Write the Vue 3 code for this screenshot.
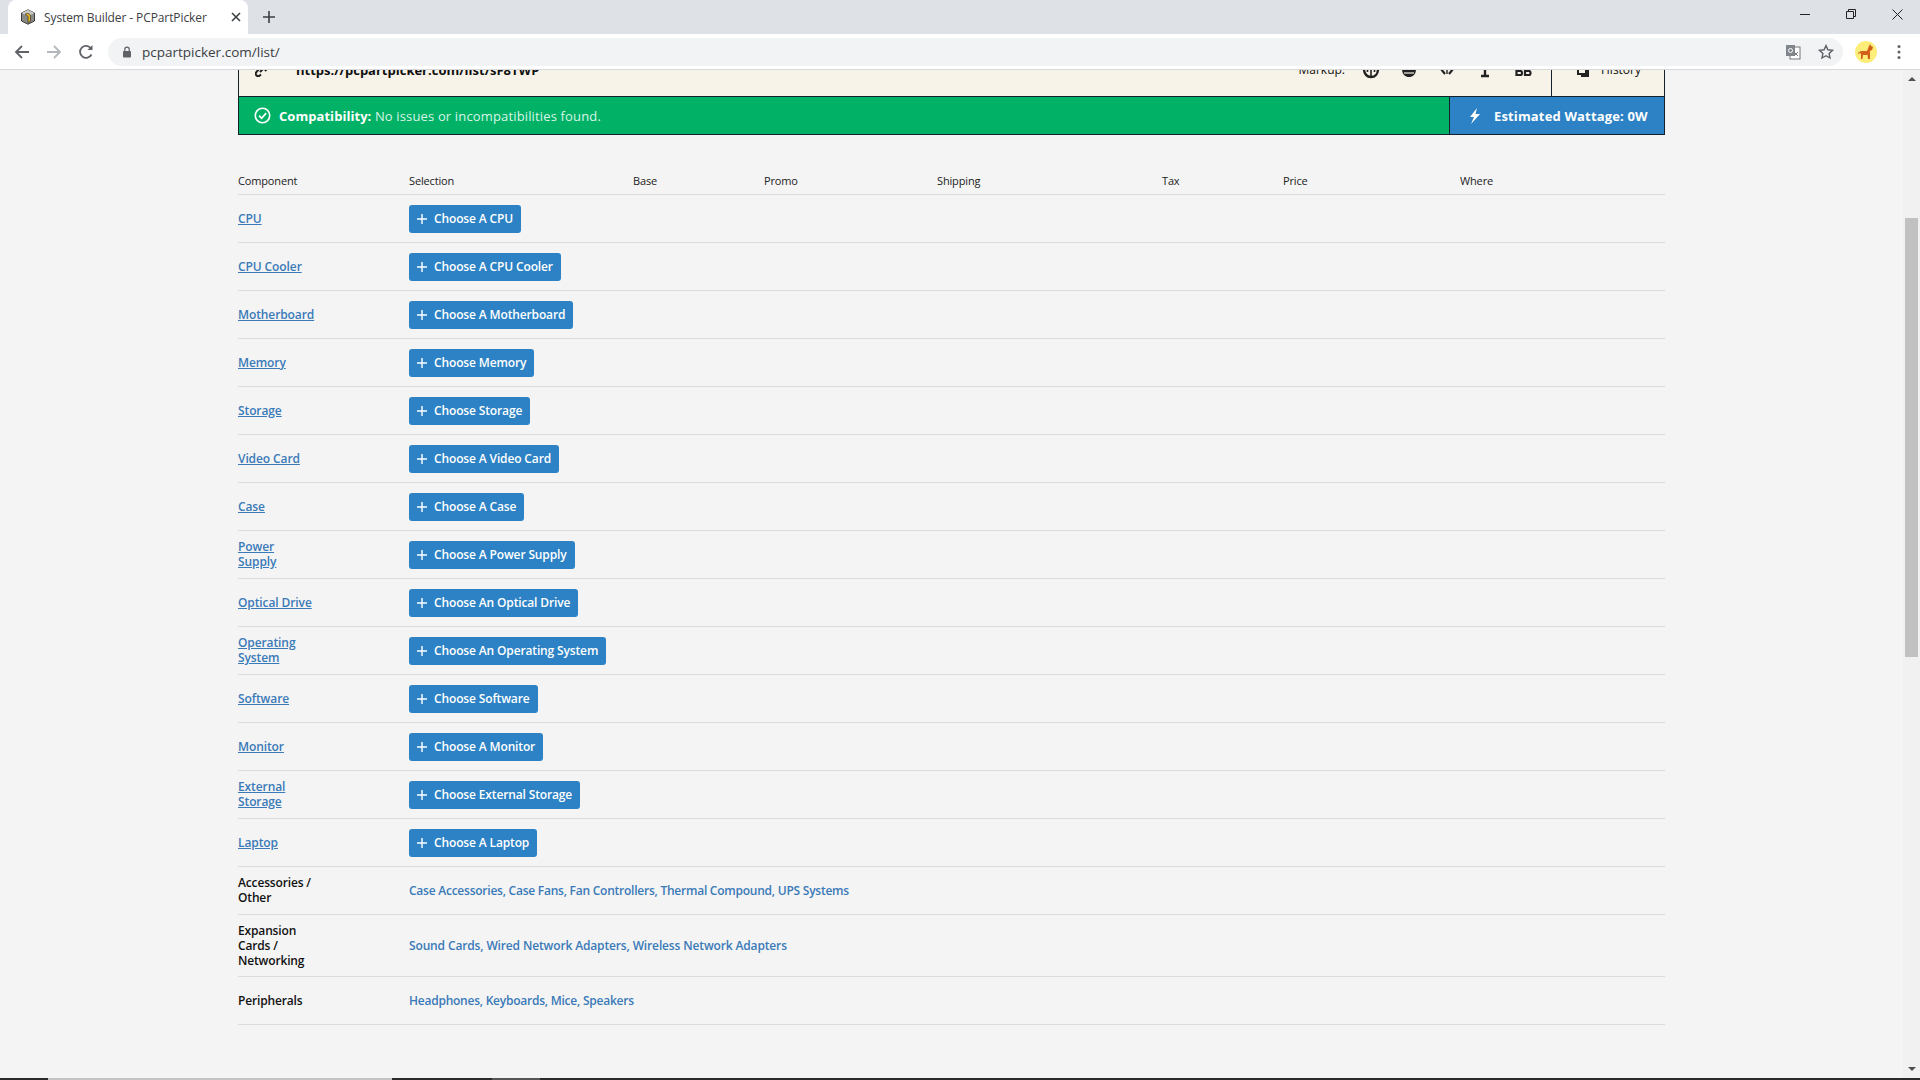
<template>
  <div class="window">
    <div class="tabstrip">
      <div class="tab">
        <svg class="favicon" viewBox="0 0 16 16" width="16" height="16">
          <path d="M8 .8 14.500 4v8L8 15.200 1.500 12V4z" fill="#8b8b86" stroke="#3a3a3a" stroke-width="1" />
          <path d="M8 .8 14.500 4 8 7.200 1.500 4z" fill="#c8c8c2" />
          <path d="M5 5.500C7 3.500 10.500 4.500 10.500 7.500V12L8 13.500V8C8 6.500 6.500 6 5 5.500z" fill="#e8b51e" stroke="#33302a" stroke-width=".7" />
        </svg>
        <span class="tab-title">System Builder - PCPartPicker</span>
        <svg class="tab-close" viewBox="0 0 10 10" width="10" height="10">
          <path d="M1 1l8 8M9 1l-8 8" stroke="#3c4043" stroke-width="1.6" />
        </svg>
      </div>
      <svg class="new-tab" viewBox="0 0 12 12" width="12" height="12">
        <path d="M6 0v12M0 6h12" stroke="#3c4043" stroke-width="1.6" />
      </svg>
      <div class="win-controls">
        <svg viewBox="0 0 10 10" width="10" height="10"><path d="M0 5.500h10" stroke="#222" stroke-width="1" /></svg>
        <svg viewBox="0 0 10 10" width="10" height="10">
          <path d="M.5 2.500h7v7h-7zM2.500 2.500v-2h7v7h-2" fill="none" stroke="#222" stroke-width="1" />
        </svg>
        <svg viewBox="0 0 11 11" width="11" height="11"><path d="M.5.500l10 10M10.500.500l-10 10" stroke="#222" stroke-width="1" /></svg>
      </div>
    </div>

    <div class="toolbar">
      <svg class="nav" viewBox="0 0 16 16" width="16" height="16">
        <path d="M15 8H2M8 2 2 8l6 6" fill="none" stroke="#5f6368" stroke-width="1.8" />
      </svg>
      <svg class="nav" viewBox="0 0 16 16" width="16" height="16">
        <path d="M1 8h13M8 2l6 6-6 6" fill="none" stroke="#b4b7bb" stroke-width="1.8" />
      </svg>
      <svg class="nav" viewBox="0 0 16 16" width="16" height="16">
        <path d="M13.500 10.500A6 6 0 1 1 13 4.500" fill="none" stroke="#5f6368" stroke-width="1.8" />
        <path d="M14.500 1v5h-5z" fill="#5f6368" />
      </svg>
      <div class="omnibox">
        <svg class="lock" viewBox="0 0 10 12" width="10" height="12">
          <path d="M2.800 5V3.400a2.200 2.200 0 0 1 4.400 0V5" fill="none" stroke="#5f6368" stroke-width="1.2" />
          <rect x="1" y="5" width="8" height="6.500" rx="1" fill="#5f6368" />
        </svg>
        <span class="url">pcpartpicker.com/list/</span>
        <svg class="translate" viewBox="0 0 16 16" width="16" height="16">
          <rect x="5" y="3" width="10" height="12" fill="#fff" stroke="#777" stroke-width="1" />
          <rect x="1" y="1" width="9" height="11" fill="#80868b" />
          <circle cx="5.500" cy="6.500" r="2" fill="none" stroke="#fff" stroke-width="1" />
          <path d="M9 8l4 4M13 8l-4 4" stroke="#777" stroke-width="1" />
        </svg>
        <svg class="star" viewBox="0 0 16 16" width="16" height="16">
          <path d="M8 1.600l1.900 4.200 4.600.5-3.400 3.100.9 4.600L8 11.700 4 14l.9-4.600L1.500 6.300l4.600-.5z" fill="none" stroke="#5f6368" stroke-width="1.4" />
        </svg>
      </div>
      <svg class="avatar" viewBox="0 0 22 22" width="22" height="22">
        <circle cx="11" cy="11" r="11" fill="#fdee7a" />
        <path d="M3 12l3-2h6l2-5 1-2 1 2 2 1-1 3-2 1v8h-2l-.5-4H8l-.5 4H6v-5l-1-1-2 1z" fill="#d2601a" />
      </svg>
      <svg class="dots" viewBox="0 0 4 16" width="4" height="16">
        <circle cx="2" cy="2.500" r="1.500" fill="#5f6368" />
        <circle cx="2" cy="8" r="1.500" fill="#5f6368" />
        <circle cx="2" cy="13.500" r="1.500" fill="#5f6368" />
      </svg>
    </div>

    <div class="page">
      <div class="content">
        <div class="panel">
          <div class="permalink">
            <div class="link-box">
              <svg class="link-icon" viewBox="0 0 14 14" width="14" height="14">
                <path d="M8 2.500 10 1a2.500 2.500 0 0 1 3 3.500L10 8M6 11.500 4 13a2.500 2.500 0 0 1-3-3.500L4 6M5 9l4-4" fill="none" stroke="#222" stroke-width="2" />
              </svg>
              <span class="link-url">https://pcpartpicker.com/list/sF8TWP</span>
              <span class="markup-label">Markup:</span>
              <div class="markup-icons">
                <svg viewBox="0 0 18 18" width="18" height="18">
                  <path d="M2 8c0 5 3 8 7 8s7-3 7-8" fill="none" stroke="#222" stroke-width="2.400" />
                  <path d="M9 7v9M5.500 7v4M12.500 7v4" stroke="#222" stroke-width="1.600" />
                </svg>
                <svg viewBox="0 0 18 18" width="18" height="18">
                  <path d="M2 8h14c0 5-3 8-7 8S2 13 2 8z" fill="#222" />
                  <path d="M4 12h10" stroke="#f7f3e8" stroke-width="1.200" />
                </svg>
                <svg viewBox="0 0 18 18" width="18" height="18">
                  <path d="M3 8l4 5M15 8l-4 5" fill="none" stroke="#222" stroke-width="2.200" />
                  <path d="M9 8v5" stroke="#222" stroke-width="1.400" />
                </svg>
                <svg viewBox="0 0 18 18" width="18" height="18">
                  <path d="M9 3v12M5 15h8" stroke="#222" stroke-width="2.400" />
                </svg>
                <svg viewBox="0 0 18 18" width="18" height="18">
                  <path d="M2.500 4v10h4c2 0 2-4 0-4H2.500M11 4v10h4c2 0 2-4 0-4h-4" fill="none" stroke="#222" stroke-width="2.200" />
                </svg>
              </div>
            </div>
            <div class="history">
              <svg viewBox="0 0 14 14" width="14" height="14">
                <path d="M2 2h8v9H2zM12 5v8H5" fill="none" stroke="#222" stroke-width="2" />
              </svg>
              <span>History</span>
            </div>
          </div>
          <div class="status">
            <div class="compat">
              <svg viewBox="0 0 16 16" width="17" height="17">
                <circle cx="8" cy="8" r="6.800" fill="none" stroke="#fff" stroke-width="1.500" />
                <path d="M4.800 8.200 7.200 10.600 11.400 5.800" fill="none" stroke="#fff" stroke-width="1.600" />
              </svg>
              <span><b>Compatibility:</b> No issues or incompatibilities found.</span>
            </div>
            <div class="wattage">
              <svg viewBox="0 0 12 16" width="12" height="16">
                <path d="M8 0 1 9h4l-3 7 9-10H6.500z" fill="#fff" />
              </svg>
              <span>Estimated Wattage: 0W</span>
            </div>
          </div>
        </div>

        <div class="parts">
          <div class="row head">
            <div v-for="col in columns" :key="col.name" :class="col.cls">{{ col.name }}</div>
          </div>
          <div v-for="part in parts" :key="part.name" class="row">
            <div class="c-name"><a class="part-link">{{ part.name }}</a></div>
            <div class="c-sel">
              <a class="choose">
                <svg viewBox="0 0 10 10" width="10" height="10"><path d="M5 0v10M0 5h10" stroke="#fff" stroke-width="1.400" /></svg>
                {{ part.action }}
              </a>
            </div>
          </div>
          <div v-for="group in extras" :key="group.name" class="row extra">
            <div class="c-name group-name">{{ group.name }}</div>
            <div class="c-sel group-links">
              <template v-for="(item, i) in group.items" :key="item">
                <a>{{ item }}</a><span v-if="i < group.items.length - 1">, </span>
              </template>
            </div>
          </div>
        </div>
      </div>
      <div class="scrollbar">
        <span class="arrow up"></span>
        <span class="thumb"></span>
        <span class="arrow down"></span>
      </div>
    </div>

    <div class="taskbar">
      <span class="seg-a"></span>
      <span class="seg-b"></span>
      <span class="seg-c"></span>
      <span class="seg-d"></span>
      <span class="seg-e"></span>
    </div>
  </div>
</template>

<script setup>
const columns = [
  { name: "Component", cls: "c-name" },
  { name: "Selection", cls: "c-head-sel" },
  { name: "Base", cls: "c-base" },
  { name: "Promo", cls: "c-promo" },
  { name: "Shipping", cls: "c-ship" },
  { name: "Tax", cls: "c-tax" },
  { name: "Price", cls: "c-price" },
  { name: "Where", cls: "c-where" },
];

const parts = [
  { name: "CPU", action: "Choose A CPU" },
  { name: "CPU Cooler", action: "Choose A CPU Cooler" },
  { name: "Motherboard", action: "Choose A Motherboard" },
  { name: "Memory", action: "Choose Memory" },
  { name: "Storage", action: "Choose Storage" },
  { name: "Video Card", action: "Choose A Video Card" },
  { name: "Case", action: "Choose A Case" },
  { name: "Power Supply", action: "Choose A Power Supply" },
  { name: "Optical Drive", action: "Choose An Optical Drive" },
  { name: "Operating System", action: "Choose An Operating System" },
  { name: "Software", action: "Choose Software" },
  { name: "Monitor", action: "Choose A Monitor" },
  { name: "External Storage", action: "Choose External Storage" },
  { name: "Laptop", action: "Choose A Laptop" },
];

const extras = [
  {
    name: "Accessories / Other",
    items: ["Case Accessories", "Case Fans", "Fan Controllers", "Thermal Compound", "UPS Systems"],
  },
  {
    name: "Expansion Cards / Networking",
    items: ["Sound Cards", "Wired Network Adapters", "Wireless Network Adapters"],
  },
  { name: "Peripherals", items: ["Headphones", "Keyboards", "Mice", "Speakers"] },
];
</script>

<style>
html,
body {
  margin: 0;
  overflow: hidden;
}
</style>

<style scoped>
.window {
  width: 1920px;
  height: 1080px;
  display: flex;
  flex-direction: column;
  overflow: hidden;
  font-family: "Open Sans", "Liberation Sans", sans-serif;
  background: #f4f4f4;
}

/* browser chrome */
.tabstrip {
  height: 34px;
  flex: none;
  display: flex;
  align-items: center;
  background: #dee1e6;
  padding-left: 8px;
}
.tab {
  width: 240px;
  height: 34px;
  box-sizing: border-box;
  background: #fff;
  border-radius: 8px 8px 0 0;
  display: flex;
  align-items: center;
  padding-left: 12px;
}
.tab-title {
  margin-left: 8px;
  font-size: 12px;
  letter-spacing: -0.1px;
  color: #3c4043;
  width: 180px;
  white-space: nowrap;
}
.tab-close {
  margin-left: 7px;
}
.new-tab {
  margin-left: 15px;
}
.win-controls {
  margin-left: auto;
  display: flex;
  align-items: center;
  gap: 36px;
  padding-right: 17px;
  margin-top: -6px;
}
.toolbar {
  height: 36px;
  flex: none;
  box-sizing: border-box;
  background: #fff;
  border-bottom: 1px solid #d6d8db;
  display: flex;
  align-items: center;
  padding: 1px 19px 0 14px;
}
.nav {
  margin-right: 16px;
}
.omnibox {
  margin-left: -2px;
  width: 1735px;
  height: 28px;
  border-radius: 14px;
  background: #f1f3f4;
  display: flex;
  align-items: center;
  padding-left: 14px;
  box-sizing: border-box;
}
.url {
  margin-left: 10px;
  font-size: 13.500px;
  color: #3c4043;
}
.translate {
  margin-left: auto;
}
.star {
  margin: 0 9px 0 17px;
}
.avatar {
  margin-left: 12px;
}
.dots {
  margin-left: 20px;
}

/* page */
.page {
  flex: 1;
  min-height: 0;
  display: flex;
  overflow: hidden;
}
.content {
  width: 1427px;
  margin-left: 238px;
}
.panel {
  margin-top: -35px;
  border: 1px solid #14212b;
  color: #111;
}
.permalink {
  height: 60px;
  display: flex;
  background: #f7f3e8;
  border-bottom: 1px solid #14212b;
}
.link-box {
  flex: 1;
  display: flex;
  align-items: center;
  padding: 7px 0 0 16px;
}
.link-url {
  margin-left: 27px;
  font-size: 13px;
  font-weight: 700;
}
.markup-label {
  margin-left: auto;
  font-size: 12px;
}
.markup-icons {
  display: flex;
  gap: 20px;
  margin: 0 19px 0 17px;
}
.history {
  width: 113px;
  box-sizing: border-box;
  border-left: 1px solid #14212b;
  display: flex;
  align-items: center;
  padding: 7px 0 0 24px;
  gap: 11px;
  font-size: 12px;
}
.status {
  height: 37px;
  display: flex;
  color: #fff;
  font-size: 13px;
}
.compat {
  flex: 1;
  background: #00b166;
  display: flex;
  align-items: center;
  gap: 8px;
  padding-left: 15px;
  color: #d9f5e6;
  letter-spacing: 0.15px;
}
.compat b {
  color: #fff;
  letter-spacing: 0.05px;
}
.wattage {
  width: 215px;
  box-sizing: border-box;
  background: #2c82c4;
  border-left: 1px solid #14212b;
  display: flex;
  align-items: center;
  gap: 13px;
  padding-left: 19px;
  font-weight: 700;
  letter-spacing: 0.15px;
}

.parts {
  margin-top: 23px;
}
.row {
  display: flex;
  align-items: center;
  height: 48px;
  box-sizing: border-box;
  border-bottom: 1px solid #dcdcdc;
  font-size: 12px;
}
.row.head {
  height: 37px;
  padding-top: 8px;
  font-size: 11px;
  letter-spacing: -0.15px;
  color: #222;
}
.c-name {
  width: 171px;
  flex: none;
  box-sizing: border-box;
  padding: 0 94px 1px 0;
  line-height: 15px;
}
.row.head .c-name {
  padding-bottom: 0;
}
.c-head-sel {
  width: 224px;
  flex: none;
}
.c-base {
  width: 131px;
  flex: none;
}
.c-promo {
  width: 173px;
  flex: none;
}
.c-ship {
  width: 225px;
  flex: none;
}
.c-tax {
  width: 121px;
  flex: none;
}
.c-price {
  width: 177px;
  flex: none;
}
.part-link {
  color: #3a7ab8;
  font-weight: 600;
  letter-spacing: -0.1px;
  text-decoration: underline;
}
.choose {
  display: inline-flex;
  align-items: center;
  gap: 7px;
  height: 28px;
  padding: 0 8px;
  background: #2c82c4;
  color: #fff;
  font-weight: 600;
  letter-spacing: -0.14px;
  border-radius: 3px;
  white-space: nowrap;
}
.extra:nth-last-child(2) {
  height: 62px;
}
.group-name {
  font-weight: 600;
  letter-spacing: -0.15px;
  color: #111;
}
.group-links {
  color: #3a7ab8;
  font-weight: 600;
  letter-spacing: -0.24px;
  white-space: pre-wrap;
}
.extra:nth-last-child(2) .group-links {
  letter-spacing: -0.14px;
}

/* scrollbar */
.scrollbar {
  position: relative;
  width: 17px;
  margin-left: auto;
  background: #f1f1f1;
}
.thumb {
  position: absolute;
  left: 2px;
  top: 148px;
  width: 13px;
  height: 439px;
  background: #c1c1c1;
}
.arrow {
  position: absolute;
  left: 5px;
  width: 0;
  height: 0;
  border-left: 4px solid transparent;
  border-right: 4px solid transparent;
}
.arrow.up {
  top: 7px;
  border-bottom: 4px solid #505050;
}
.arrow.down {
  bottom: 7px;
  border-top: 4px solid #505050;
}

/* sliver of the taskbar at the very bottom */
.taskbar {
  height: 2px;
  flex: none;
  display: flex;
  background: #2b2b2b;
}
.seg-a {
  width: 48px;
}
.seg-b {
  width: 344px;
  background: #c4c4c4;
}
.seg-c {
  width: 100px;
}
.seg-d {
  width: 48px;
  background: #555;
}
.seg-e {
  flex: 1;
}
</style>
